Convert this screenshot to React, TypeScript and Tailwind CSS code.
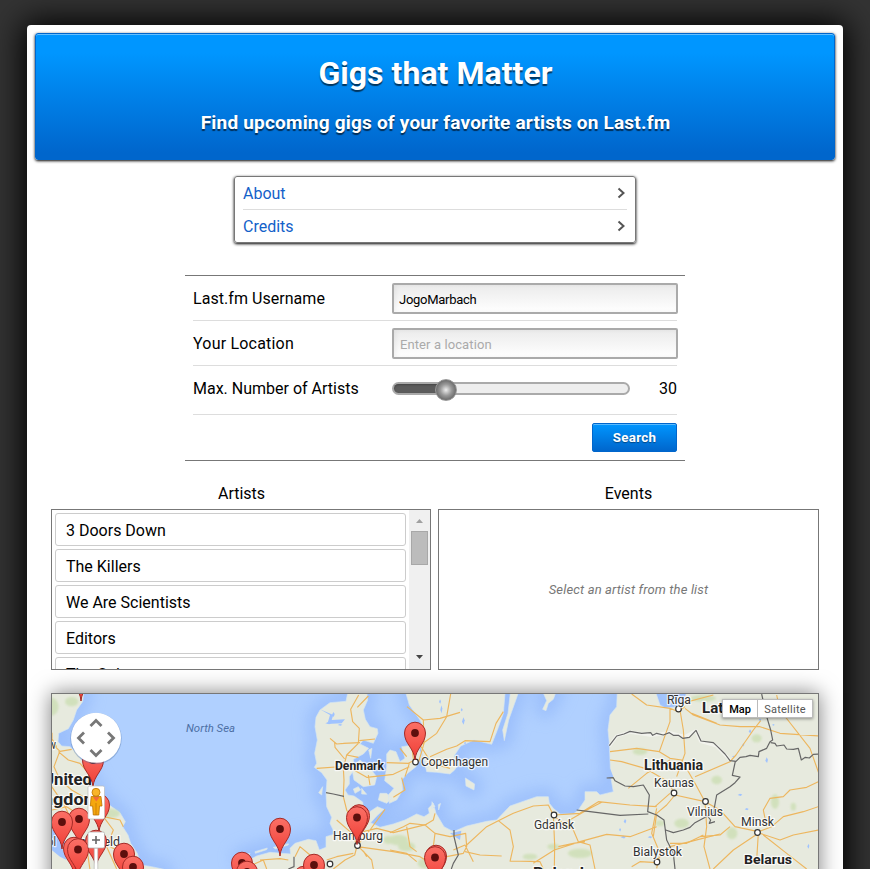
import { ReactNode } from "react";

const artists = ["3 Doors Down", "The Killers", "We Are Scientists", "Editors", "The Calypso"];

function Chevron() {
  return (
    <svg width="8" height="12" viewBox="0 0 8 12" fill="none" stroke="#555" strokeWidth="2">
      <path d="M1.5 1.5 6.5 6 1.5 10.5" />
    </svg>
  );
}

function MenuLink({ children }: { children: ReactNode }) {
  return (
    <a className="flex h-[33px] items-center justify-between border-b border-[#ddd] pr-[2px] text-[#1361c9] last:h-[32px] last:border-0">
      <span className="pt-[2px]">{children}</span>
      <Chevron />
    </a>
  );
}

function Pin({ x, y }: { x: number; y: number }) {
  return (
    <g transform={`translate(${x} ${y})`}>
      <path
        d="M0 27C-.8 15-10.5 11-10.5 0A10.5 10.8 0 1 1 10.5 0C10.5 11 .8 15 0 27Z"
        fill="url(#pin)"
        stroke="#a52a26"
        strokeWidth="1"
      />
      <circle r="3.9" fill="#5d0f0d" />
    </g>
  );
}

const pins = [
  [81, 674], [93, 760], [99, 805], [79, 819], [62, 822], [96, 841], [74, 848], [78, 849.5],
  [124, 854], [133, 867], [415, 733], [359, 815.5], [357, 817.5], [280, 829], [242, 863],
  [247, 872], [304, 877], [314, 865], [436, 856], [435, 857.5],
];

const parks = [
  [30, 80, 26, 28], [95, 65, 20, 14], [210, 400, 30, 14], [1000, 500, 18, 9], [1080, 520, 36, 14], [930, 530, 22, 9],
  [535, 480, 30, 16], [560, 500, 26, 14], [615, 550, 22, 16], [1260, 215, 22, 10], [1385, 430, 22, 14],
  [1490, 300, 16, 13], [1610, 175, 15, 12], [1665, 365, 12, 22], [1536, 460, 16, 18], [1450, 55, 38, 10],
  [1720, 380, 8, 12], [505, 480, 15, 12], [1320, 430, 14, 9],
];

const lakes = [
  [664, 90, 3, 14], [730, 125, 4, 13], [340, 105, 4, 9], [325, 130, 9, 4], [660, 66, 3, 8], [725, 90, 3, 6],
  [1215, 425, 4, 8], [1210, 472, 8, 5], [1290, 472, 7, 4], [1560, 345, 7, 4], [1580, 388, 6, 4], [1640, 242, 4, 10],
  [1590, 155, 4, 7], [1570, 195, 3, 6], [1765, 500, 3, 9], [1620, 120, 4, 4], [360, 135, 7, 3], [735, 190, 3, 5],
  [1660, 135, 4, 3], [1200, 450, 3, 6], [1540, 230, 4, 3],
];

/* Geography is drawn on a grid three times finer than the screen. */
function Geography() {
  const land =
    "M70 640 80 567 88 540 110 528 150 517 212 522 210 505 225 490 265 478 288 482 298 510 318 502 318 470 345 462 330 430 335 412 320 380 318 340 321 300 305 278 283 262 290 250 284 220 292 180 285 140 288 112 300 90 330 68 378 64 385 30 440 30 443 60 430 90 436 118 450 140 472 146 474 160 460 190 430 180 420 192 446 205 430 222 400 238 402 270 388 290 388 312 375 330 384 345 402 348 428 366 432 394 448 396 472 380 492 388 470 408 452 428 480 442 520 432 555 420 590 402 612 410 628 400 625 385 640 370 648 400 672 440 700 455 740 438 800 424 830 420 870 378 950 350 985 350 988 370 1000 385 1020 402 1060 402 1075 390 1095 360 1095 335 1130 335 1140 345 1180 335 1172 290 1170 240 1168 190 1164 150 1170 105 1190 80 1192 30 1305 30 1320 75 1336 84 1360 82 1390 70 1402 30 1840 30 1840 640Z";
  const britain =
    "M-520 30H-408L-412 65-430 90-440 120-455 146-484 160-486 185-475 198-450 200-430 218-408 250-386 302-360 340-332 375-300 398-284 425-292 440-276 465-268 490-248 520-237 555-205 560-168 568-150 640H-520Z";
  const sweden =
    "M555 30 568 75 600 120 614 148 600 180 598 210 612 240 620 275 650 277 690 282 704 270 714 255 702 228 722 198 762 180 815 193 832 150 850 100 856 30Z";
  const islands = [
    "M500 222 510 210 528 215 540 245 555 235 545 200 600 192 608 225 588 260 563 280 545 300 548 330 530 360 508 370 505 345 522 325 494 302 500 260Z",
    "M395 262 420 240 450 265 470 290 464 315 430 320 402 300Z",
    "M480 340 500 340 515 355 500 370 475 360Z",
    "M446 210 456 205 452 235Z",
    "M872 30H898L884 70 866 120 853 182 848 150 864 100Z",
    "M966 30H1010L1000 58 985 70 978 92 968 88 980 62Z",
    "M736 294 764 312 762 330 738 318Z",
    "M400 327 415 320 422 330 405 340Z M425 325 440 343 425 342Z M296 338 308 320 305 345Z",
    "M636 365 645 380 635 386Z M655 374 662 370 656 390Z",
    "M105 515 142 504 140 509 106 520Z M60 529 90 520 88 524 62 535Z M160 502 205 491 205 495 166 507Z",
  ];
  const shapes = [land, britain, sweden, ...islands].join(" ");
  return (
    <g transform="translate(220 680) scale(.333333)" strokeLinejoin="round">
      <path d={shapes} fill="none" stroke="#90b5f9" strokeWidth="46" filter="url(#soft)" opacity=".65" />
      <path d={shapes} fill="#e7eade" stroke="#d5e5f2" strokeWidth="2" />
      <g fill="#c6dcaa" opacity=".65" filter="url(#edge)">
        {parks.map(([x, y, rx, ry], i) => (
          <ellipse key={i} cx={i < 3 ? x - 540 : x} cy={y} rx={rx} ry={ry} />
        ))}
      </g>
      <g fill="#a0c3ff" stroke="none">
        {lakes.map(([x, y, rx, ry], i) => (
          <path key={i} d={`M${x - rx} ${y}l${rx} ${-ry} ${rx} ${ry * 0.7} ${-rx * 0.7} ${ry}Z`} />
        ))}
        <path d="M-505 448 -480 458-460 490-475 500-460 540-480 530-505 510Z M300 88 340 105 335 120 375 118 365 130 322 132 330 105Z M1170 265 1180 290 1165 300Z M690 460 724 452 720 480 705 470Z" />
      </g>
      <g fill="none" stroke="#fff" strokeWidth="10" opacity=".45">
        <path d="M1168 198 1190 168 1230 156 1295 166 1348 158 1395 170 1428 152 1442 184 1490 198 1532 242" />
      </g>
      <g fill="none" stroke="#edb65e" strokeWidth="3.4">
        {/* Britain */}
        <path d="M-504 158V190L-480 214-445 208 M-480 212-498 260-480 300-445 330-410 350 M-485 215-455 240-420 250-390 285 M-505 320-470 370-450 410-400 500-390 570 M-400 300-370 360-350 410-320 450-340 500-310 567 M-350 410-300 420-290 440 M-504 390-460 380-430 400 M-330 500-290 520-250 540 M-505 175-490 200" />
        {/* Jutland and the Danish islands */}
        <path d="M416 45 392 88 398 125 418 145 415 190 380 225 370 265 372 300 370 350 380 390 402 430M445 48 412 82M344 188 345 202 374 237M330 175 350 192 372 190M370 190 420 188M418 182 465 177M380 225 415 232M290 265 390 258 455 255M385 260 440 292 520 283 568 260M500 248 565 250 585 240M575 195 580 235 590 246M540 205 560 230M545 293 555 330 520 352M445 285 450 315M568 250 555 290" />
        {/* Northern Germany */}
        <path d="M350 420 390 455 412 495 404 525 375 540 340 567M412 496 450 450 495 388M412 500 520 515 600 530 660 567M430 455 470 445 520 458 620 433M412 496 455 540 460 567M320 540 350 530 400 520M120 540 180 536 205 540M85 560 130 540 140 567M225 530 240 500 270 525 290 567M430 512 440 530" />
        <path d="M510 458 550 440 570 430 615 435 640 420 645 400M560 440 570 500 590 515M615 435 645 460 640 500M510 510 560 520 590 545M645 460 690 470 737 460 740 500 730 520 680 530M700 510 735 495 760 545" />
        {/* Sweden */}
        <path d="M561 80 610 120 612 190 596 246M610 120 660 115 720 97M692 42 680 110 650 160 602 195M600 195 635 250 690 265M630 230 680 208 710 198 735 182 810 185 828 130 850 95" />
        {/* Poland */}
        <path d="M740 495 800 440 835 422 880 400 940 378 985 375 1000 405 1004 495 1003 567M835 422 870 450 880 500 870 545M735 515 780 525 845 528M870 543 960 545 970 567M940 550 1003 510 1080 485 1160 463 1230 470 1310 440M1000 407 1030 430 1060 450 1075 485 1110 495 1125 567M1004 405 1080 400 1135 365 1230 375 1310 380M1040 425 1110 385 1145 367M1310 385 1295 460 1320 520 1310 565M1310 540 1350 500 1410 485 1500 462M1015 500 1060 490 1095 485M1235 560 1260 545 1310 548" />
        {/* Baltic states and Belarus */}
        <path d="M1235 42 1280 75 1350 85 1375 95 1395 80M1350 85 1350 125 1318 215 1250 205 1170 215M1380 90 1390 150 1395 220 1370 290M1170 240 1205 245 1275 265 1345 305 1365 345 1455 365M1318 215 1350 235 1385 240 1425 310 1455 365M1225 325 1280 280 1350 240M1425 290 1530 245 1548 225 1600 150 1622 122M1395 85 1420 105 1500 135 1560 140 1620 140 1680 160 1800 168M1415 100 1490 130M1670 45 1680 90 1770 205 1800 290M1385 70 1480 45M1365 345 1340 375 1310 400 1300 470M1455 365 1500 390 1545 440 1615 455 1655 440 1690 410 1750 395 1795 380M1455 365 1460 440 1452 500 1470 567M1615 460 1540 510 1480 567M1615 460 1610 540M1620 460 1680 480 1720 465 1795 450M1630 465 1700 520 1760 567M1640 440 1630 390 1650 355 1690 350 1710 330 1760 322 1795 305M1450 465 1400 490 1350 490M1530 440 1500 465 1440 470M1305 380 1350 340" />
      </g>
      <g fill="none" stroke="#666" strokeWidth="3.6">
        <path d="M318 338 340 342 372 349M222 530V560L205 567M702 450V470L715 525 700 550 694 567" />
        <path d="M1168 197 1190 168 1212 162 1230 154 1265 160 1292 158 1298 166 1310 160 1330 165 1348 158 1360 166 1375 166 1388 175 1408 172 1428 151 1443 183 1480 188 1495 202 1515 222 1530 242 1548 244 1560 232 1578 230 1590 226 1615 230 1617 215 1640 205 1650 185 1658 180 1652 150 1640 110 1625 42M1652 188 1665 190 1670 198 1692 195 1700 207 1720 208 1735 205 1744 240 1756 232 1768 234 1780 223 1800 222" />
        <path d="M1160 294 1180 293 1185 302 1215 318 1240 320 1270 315 1288 345 1283 395 1310 405 1332 420 1340 480 1360 520 1365 567M1070 390 1110 395 1200 406 1285 402M1337 450 1360 458 1390 450 1410 442 1425 428 1450 415 1480 400 1490 345 1530 320 1545 308 1560 291 1537 286 1546 244M1460 405 1472 420 1468 430 1485 425" />
      </g>
    </g>
  );
}

function Place({ x, y, size = 12, bold, w, children }: { x: number; y: number; size?: number; bold?: boolean; w: number; children: string }) {
  return (
    <text x={x} y={y} textLength={w} lengthAdjust="spacingAndGlyphs" fontSize={size} fontWeight={bold ? 700 : 400} fill={bold ? "#222" : "#333"}
      stroke="#fff" strokeOpacity=".75" strokeWidth="2.5" paintOrder="stroke" strokeLinejoin="round">
      {children}
    </text>
  );
}

const towns = [[415.5, 762], [357.5, 845.5], [330, 864], [554, 815], [678.5, 709], [674, 793], [705.5, 801.5], [757.5, 832.5], [657, 862]];

function GigMap() {
  return (
    <div className="relative mx-4 mt-[23px] h-[400px] border border-[#777] bg-[#b0d0ff] shadow-[0_0_20px_rgba(0,0,0,0.5)]">
      <svg className="block h-[180px] w-full" viewBox="52 694 766 180" fontFamily="Roboto, sans-serif">
        <defs>
          <linearGradient id="pin" x1="0" y1="0" x2="0" y2="1">
            <stop offset="0" stopColor="#fb7066" />
            <stop offset="1" stopColor="#ef3d35" />
          </linearGradient>
          <filter id="soft" x="-20%" y="-40%" width="140%" height="180%"><feGaussianBlur stdDeviation="22" /></filter>
          <filter id="edge"><feGaussianBlur stdDeviation="3" /></filter>
        </defs>
        <Geography />
        {towns.map(([x, y]) => (
          <circle key={x} cx={x} cy={y} r="2.8" fill="#fff" stroke="#333" strokeWidth="1.2" />
        ))}
        <text x="186" y="732" textLength="49" lengthAdjust="spacingAndGlyphs" fontSize="11.5" fontStyle="italic" fill="#4d6fa5">North Sea</text>
        <Place x={43} y={784.5} size={16.5} bold w={49}>United</Place>
        <Place x={27} y={804.5} size={16.5} bold w={72}>Kingdom</Place>
        <Place x={48} y={749} w={8}>w</Place>
        <Place x={14} y={846} w={42}>Liverpool</Place>
        <Place x={72} y={846} w={48}>Sheffield</Place>
        <Place x={335} y={769.5} bold size={12.5} w={49}>Denmark</Place>
        <Place x={421} y={766} w={67}>Copenhagen</Place>
        <Place x={333} y={840} w={50}>Hamburg</Place>
        <Place x={534} y={829} w={40}>Gdańsk</Place>
        <Place x={533} y={878} size={15.5} bold w={51}>Poland</Place>
        <Place x={667} y={704} w={24}>Rīga</Place>
        <Place x={702} y={713} size={14} bold w={41}>Latvia</Place>
        <Place x={644} y={770} size={13.8} bold w={59}>Lithuania</Place>
        <Place x={654} y={787} w={40}>Kaunas</Place>
        <Place x={687} y={816} w={36}>Vilnius</Place>
        <Place x={741} y={826} w={33}>Minsk</Place>
        <Place x={633} y={856} w={49}>Bialystok</Place>
        <Place x={744} y={864} size={13.5} bold w={48}>Belarus</Place>
        {pins.map(([x, y], i) => (
          <Pin key={i} x={x} y={y} />
        ))}
        {/* Pan wheel */}
        <g>
          <circle cx="96" cy="738.5" r="25.7" fill="#5577aa" opacity=".4" />
          <circle cx="96" cy="737.8" r="25" fill="#fff" />
          <path d="M90.5 726 96 720.5 101.5 726M90.5 750 96 755.5 101.5 750M84 732.5 78.5 738 84 743.5M108 732.5 113.5 738 108 743.5" fill="none" stroke="#777" strokeWidth="2.8" />
        </g>
        {/* Street view figure */}
        <rect x="88" y="786" width="16.5" height="33" rx="1.5" fill="#fff" stroke="#bbb" strokeWidth=".7" />
        <path d="M91.2 796.5H101L102 806H99.5L98.8 815H93.3L92.6 806H90.3Z" fill="#f5a70e" stroke="#bd7200" strokeWidth=".8" />
        <path d="M93 797H99.5L96.3 801.5Z" fill="#f26b3b" />
        <path d="M96 803V815" stroke="#bd7200" strokeWidth=".7" />
        <circle cx="96" cy="792.3" r="4" fill="#f9b52a" stroke="#bd7200" strokeWidth=".8" />
        {/* Zoom control */}
        <path d="M94.2 848H97.8V874H94.2Z" fill="#fff" stroke="#aaa" strokeWidth=".6" />
        <rect x="88" y="832" width="16.5" height="16" rx="1.5" fill="#fff" stroke="#aaa" strokeWidth=".7" />
        <path d="M92 840H100M96 836V844" stroke="#666" strokeWidth="1.6" />
      </svg>
      <div className="absolute right-[5px] top-[5px] flex h-[19px] border border-[#bbb] bg-white text-[11px] leading-[19px] shadow-[0_1px_3px_rgba(0,0,0,0.4)]">
        <span className="w-[35px] border-r border-[#bbb] text-center font-medium text-black">Map</span>
        <span className="w-[54px] text-center tracking-[0.25px] text-[#555]">Satellite</span>
      </div>
    </div>
  );
}

function SearchForm() {
  const field =
    "-mr-px h-[31px] w-[286px] rounded-[2px] border-2 border-[#aaa] bg-linear-to-b from-[#ebebeb] to-white pt-[2px] text-[13px] outline-none shadow-[inset_2px_0_4px_rgba(0,0,0,0.05)] placeholder:text-[#aaa]";
  return (
    <form className="mx-auto mt-[32px] h-[186px] w-[500px] border-y border-[#777] px-2">
      <div className="flex h-[45px] items-center justify-between border-b border-[#ddd]">
        <label className="pt-[2px] tracking-[0.05px]">Last.fm Username</label>
        <input className={`${field} pl-[5px] tracking-[-0.27px]`} defaultValue="JogoMarbach" />
      </div>
      <div className="flex h-[45px] items-center justify-between border-b border-[#ddd]">
        <label className="pt-[2px] tracking-[0.2px]">Your Location</label>
        <input className={`${field} pl-[6px] tracking-[0.1px]`} placeholder="Enter a location" />
      </div>
      <div className="flex h-[49px] items-center border-b border-[#ddd] pb-[3px]">
        <label className="w-[199px]">Max. Number of Artists</label>
        <div className="relative h-[13px] w-[238px] rounded-full border-2 border-[#aaa] bg-[#eee]">
          <div className="h-full w-[52px] rounded-l-full bg-[#5c5c5c] shadow-[inset_0_1px_2px_#444]" />
          <div className="absolute left-[41px] top-[-5px] size-[22px] rounded-full border border-[#999] bg-[radial-gradient(circle,#eee_0%,#999_40%,#666_75%)]" />
        </div>
        <span className="ml-auto">30</span>
      </div>
      <button type="button" className="ml-auto mt-2 block h-[29px] w-[85px] rounded-[2px] border border-[#06c] bg-linear-to-b from-[#0096ff] to-[#06c] pt-px text-[13.3px] font-bold tracking-[0.3px] text-white shadow-[inset_0_1px_0_rgba(255,255,255,0.35)] [text-shadow:0_1px_1px_#0006]">
        Search
      </button>
    </form>
  );
}

export default function App() {
  return (
    <div className="h-[869px] overflow-hidden bg-[#333] pt-[25px] font-['Roboto',sans-serif] text-[16px] leading-[22px] text-black">
      <main className="ml-[27px] h-[1000px] w-[816px] rounded-[4px] bg-white p-2 shadow-[0_0_32px_4px_#000]">
        <header className="h-[127px] rounded-[3px] border border-[#06c] bg-linear-to-b from-[#0096ff] from-15% to-[#06c] to-95% text-center font-bold text-white shadow-[inset_0_1px_0_rgba(255,255,255,0.4),0_1px_3px_#000]">
          <h1 className="mt-[20px] pl-px text-[32px] leading-[38px] tracking-[0.05px] [text-shadow:0_2px_1px_#0009]">Gigs that Matter</h1>
          <h2 className="mt-[20px] pl-px text-[19px] leading-[22px] tracking-[0.2px] [text-shadow:0_2px_1px_#0009]">Find upcoming gigs of your favorite artists on Last.fm</h2>
        </header>
        <nav className="mx-auto mt-4 h-[67px] w-[402px] rounded-[3px] border border-[#777] px-2 shadow-[0_1px_3px_#000]">
          <MenuLink>About</MenuLink>
          <MenuLink>Credits</MenuLink>
        </nav>
        <SearchForm />
        <section className="mx-4 mt-[22px] grid grid-cols-[380px_381px] gap-x-[7px]">
          <h3 className="mb-[4px] pl-px text-center">Artists</h3>
          <h3 className="mb-[4px] text-center">Events</h3>
          <div className="flex h-[161px] overflow-hidden border border-[#777]">
            <ul className="flex flex-1 flex-col gap-[3px] p-[3px]">
              {artists.map((name) => (
                <li key={name} className="h-[33px] shrink-0 rounded-[3px] border border-[#ccc] px-[10px] leading-[33px]">
                  {name}
                </li>
              ))}
            </ul>
            <div className="flex w-[21px] flex-col items-center justify-between bg-[#f0f0f0] pb-[10px] pt-[9px]">
              <div className="flex flex-col items-center gap-2">
                <svg width="7" height="4"><path d="M0 4 3.5 0 7 4Z" fill="#a0a0a0" /></svg>
                <div className="h-[34px] w-[17px] border border-[#a8a8a8] bg-[#bcbcbc]" />
              </div>
              <svg width="7" height="4"><path d="M0 0H7L3.5 4Z" fill="#444" /></svg>
            </div>
          </div>
          <div className="flex h-[161px] items-center justify-center border border-[#777] text-[13px] italic tracking-[0.15px] text-[#777]">
            Select an artist from the list
          </div>
        </section>
        <GigMap />
      </main>
    </div>
  );
}
